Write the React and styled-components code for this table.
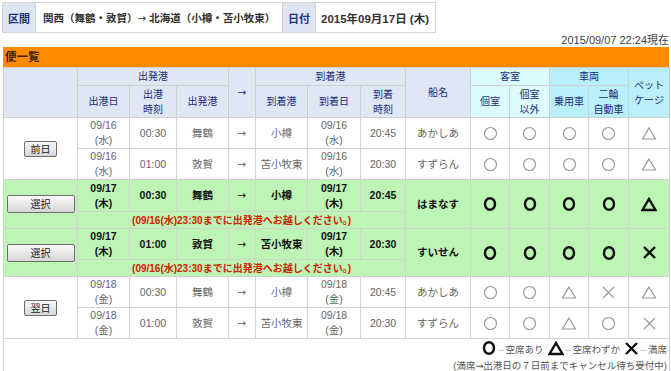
import React from 'react';
import styled, { createGlobalStyle } from 'styled-components';

const GlobalStyle = createGlobalStyle`
  body {
    margin: 0;
    background: #fff;
    font-family: "Liberation Sans", "Noto Sans CJK JP", sans-serif;
  }
`;

const widths = [74, 52, 47, 52, 27, 52, 53, 45, 65, 39, 40, 39, 40, 41];

const Circle = ({ bold }) => (
  bold ? (
    <svg width="14" height="16" viewBox="0 0 14 16">
      <ellipse cx="7" cy="8" rx="5" ry="5.8" fill="none" stroke="#111" strokeWidth="2.4" />
    </svg>
  ) : (
    <svg width="15" height="15" viewBox="0 0 15 15">
      <circle cx="7.5" cy="7.5" r="6" fill="none" stroke="#9a9a9a" strokeWidth="1.2" />
    </svg>
  )
);

const Triangle = ({ bold }) => (
  <svg width="16" height="15" viewBox="0 0 16 15">
    <polygon
      points="8,2 14.5,13 1.5,13"
      fill="none"
      stroke={bold ? '#111' : '#9a9a9a'}
      strokeWidth={bold ? 2.4 : 1.2}
    />
  </svg>
);

const Cross = ({ bold }) => (
  <svg width="15" height="15" viewBox="0 0 15 15">
    <path
      d="M2 2 L13 13 M13 2 L2 13"
      stroke={bold ? '#111' : '#9a9a9a'}
      strokeWidth={bold ? 2.4 : 1.2}
    />
  </svg>
);

const Mark = ({ type, bold }) => {
  if (type === 'o') return <Circle bold={bold} />;
  if (type === 't') return <Triangle bold={bold} />;
  return <Cross bold={bold} />;
};

const prevRows = [
  { dep: '09/16', depW: '(水)', time: '00:30', port: '舞鶴', to: '小樽', arr: '09/16', arrW: '(水)', arrTime: '20:45', ship: 'あかしあ', marks: ['o', 'o', 'o', 'o', 't'] },
  { dep: '09/16', depW: '(水)', time: '01:00', port: '敦賀', to: '苫小牧東', arr: '09/16', arrW: '(水)', arrTime: '20:30', ship: 'すずらん', marks: ['o', 'o', 'o', 'o', 't'] },
];

const selRows = [
  { dep: '09/17', depW: '(木)', time: '00:30', port: '舞鶴', to: '小樽', arr: '09/17', arrW: '(木)', arrTime: '20:45', ship: 'はまなす', marks: ['o', 'o', 'o', 'o', 't'], h: 32 },
  { dep: '09/17', depW: '(木)', time: '01:00', port: '敦賀', to: '苫小牧東', arr: '09/17', arrW: '(木)', arrTime: '20:30', ship: 'すいせん', marks: ['o', 'o', 'o', 'o', 'x'], h: 30 },
];

const nextRows = [
  { dep: '09/18', depW: '(金)', time: '00:30', port: '舞鶴', to: '小樽', arr: '09/18', arrW: '(金)', arrTime: '20:45', ship: 'あかしあ', marks: ['o', 'o', 't', 'x', 't'] },
  { dep: '09/18', depW: '(金)', time: '01:00', port: '敦賀', to: '苫小牧東', arr: '09/18', arrW: '(金)', arrTime: '20:30', ship: 'すずらん', marks: ['o', 'o', 't', 'o', 'x'] },
];

const PlainRow = ({ row, button, span }) => (
  <tr>
    {button && (
      <Td rowSpan={span}>
        <SmallButton>{button}</SmallButton>
      </Td>
    )}
    <Td>{row.dep}<br />{row.depW}</Td>
    <Td>{row.time}</Td>
    <Td>{row.port}</Td>
    <Td><Arrow>→</Arrow></Td>
    <Td>{row.to}</Td>
    <Td>{row.arr}<br />{row.arrW}</Td>
    <Td>{row.arrTime}</Td>
    <Td>{row.ship}</Td>
    {row.marks.map((m, i) => (
      <Td key={i}><Mark type={m} /></Td>
    ))}
  </tr>
);

const SelectedRow = ({ row }) => (
  <>
    <tr style={{ height: row.h }}>
      <SelTd rowSpan={2}><SelectButton>選択</SelectButton></SelTd>
      <SelTd>{row.dep}<br />{row.depW}</SelTd>
      <SelTd>{row.time}</SelTd>
      <SelTd>{row.port}</SelTd>
      <SelTd><Arrow>→</Arrow></SelTd>
      <SelTd>{row.to}</SelTd>
      <SelTd>{row.arr}<br />{row.arrW}</SelTd>
      <SelTd>{row.arrTime}</SelTd>
      <SelTd rowSpan={2}>{row.ship}</SelTd>
      {row.marks.map((m, i) => (
        <SelTd key={i} rowSpan={2}><Mark type={m} bold /></SelTd>
      ))}
    </tr>
    <tr>
      <Notice colSpan={7}>(09/16(水)23:30までに出発港へお越しください。)</Notice>
    </tr>
  </>
);

export default function App() {
  return (
    <Page>
      <GlobalStyle />
      <InfoBar>
        <InfoLabel>区間</InfoLabel>
        <InfoValue width={248}>関西（舞鶴・敦賀）<Arrow>→</Arrow> 北海道（小樽・苫小牧東）</InfoValue>
        <InfoLabel>日付</InfoLabel>
        <InfoValue width={122}>2015年09月17日 (木)</InfoValue>
      </InfoBar>
      <Updated>2015/09/07 22:24現在</Updated>
      <SectionTitle>便一覧</SectionTitle>
      <Table>
        <colgroup>
          {widths.map((w, i) => <col key={i} style={{ width: w }} />)}
        </colgroup>
        <thead>
          <tr style={{ height: 18 }}>
            <Th rowSpan={2} />
            <Th colSpan={3}>出発港</Th>
            <Th rowSpan={2}><Arrow>→</Arrow></Th>
            <Th colSpan={3}>到着港</Th>
            <Th rowSpan={2}>船名</Th>
            <Th colSpan={2} tone="room">客室</Th>
            <Th colSpan={2} tone="car">車両</Th>
            <Th rowSpan={2} tone="car">ペット<br />ケージ</Th>
          </tr>
          <tr style={{ height: 32 }}>
            <Th>出港日</Th>
            <Th>出港<br />時刻</Th>
            <Th>出発港</Th>
            <Th>到着港</Th>
            <Th>到着日</Th>
            <Th>到着<br />時刻</Th>
            <Th tone="room">個室</Th>
            <Th tone="room">個室<br />以外</Th>
            <Th tone="car">乗用車</Th>
            <Th tone="car">二輪<br />自動車</Th>
          </tr>
        </thead>
        <tbody>
          {prevRows.map((r, i) => (
            <PlainRow key={`p${i}`} row={r} button={i === 0 ? '前日' : null} span={2} />
          ))}
          {selRows.map((r, i) => (
            <SelectedRow key={`s${i}`} row={r} />
          ))}
          {nextRows.map((r, i) => (
            <PlainRow key={`n${i}`} row={r} button={i === 0 ? '翌日' : null} span={2} />
          ))}
          <tr>
            <LegendCell colSpan={14}>
              <LegendLine>
                <Mark type="o" bold /><Dots>···</Dots>空席あり
                <Mark type="t" bold /><Dots>···</Dots>空席わずか
                <Mark type="x" bold /><Dots>···</Dots>満席
              </LegendLine>
              <LegendLine>(満席<Arrow>→</Arrow>出港日の７日前までキャンセル待ち受付中)</LegendLine>
            </LegendCell>
          </tr>
        </tbody>
      </Table>
    </Page>
  );
}

const Page = styled.div`
  padding: 2px 2px 0 3px;
  width: 666px;
`;

const InfoBar = styled.div`
  display: flex;
  height: 31px;
  margin-left: -1px;
  width: 434px;
  border: 1px solid #d4d4d4;
  box-sizing: border-box;
`;

const InfoLabel = styled.div`
  display: flex;
  flex-shrink: 0;
  align-items: center;
  justify-content: center;
  width: 32px;
  background: #dde4f2;
  color: #1d3580;
  font-weight: bold;
  font-size: 11px;
`;

const InfoValue = styled.div`
  display: flex;
  flex-shrink: 0;
  align-items: center;
  white-space: pre;
  width: ${({ width }) => width}px;
  padding-left: 7px;
  box-sizing: border-box;
  border-left: 1px solid #d4d4d4;
  border-right: 1px solid #d4d4d4;
  color: #333;
  font-weight: bold;
  font-size: 10.5px;
  &:last-child { border-right: none; padding-left: 5px; font-size: 11.5px; }
`;

const Arrow = styled.span`
  font-family: "DejaVu Sans", sans-serif;
  font-weight: normal;
`;

const Updated = styled.div`
  text-align: right;
  font-size: 11px;
  color: #444;
  height: 14px;
  line-height: 14px;
`;

const SectionTitle = styled.div`
  background: #ff8a00;
  height: 20px;
  line-height: 20px;
  padding-left: 2px;
  font-size: 11.5px;
  font-weight: bold;
  color: #3a2410;
`;

const Table = styled.table`
  border-collapse: collapse;
  table-layout: fixed;
  width: 666px;
  font-size: 10px;
  line-height: 15px;
`;

const toneBg = {
  room: '#dcfbff',
  car: '#b9eff9',
};

const Th = styled.th`
  background: ${({ tone }) => toneBg[tone] || '#dfe6f4'};
  color: #1d2d78;
  font-weight: normal;
  border: 1px solid #cfcfcf;
  padding: 0;
  text-align: center;
  vertical-align: middle;
`;

const Td = styled.td`
  height: 30px;
  border: 1px solid #d2d2d2;
  padding: 0;
  text-align: center;
  vertical-align: middle;
  color: #666;
  font-size: 10.5px;
  svg { display: block; margin: 0 auto; }
`;

const SelTd = styled(Td)`
  background: #bdf5b4;
  color: #111;
  font-weight: bold;
  height: auto;
`;

const Notice = styled.td`
  background: #bdf5b4;
  color: #cc2200;
  font-weight: bold;
  font-size: 10px;
  text-align: center;
  height: 16px;
  padding: 0;
  border: 1px solid #d2d2d2;
`;

const SmallButton = styled.button`
  font-family: "Noto Sans CJK JP", sans-serif;
  font-size: 10px;
  width: 33px;
  height: 16px;
  padding: 0;
  line-height: 14px;
  color: #222;
  border: 1px solid #6e6e6e;
  border-radius: 2px;
  background: linear-gradient(#fafafa, #d6d6d6);
`;

const SelectButton = styled(SmallButton)`
  width: 68px;
  height: 18px;
  line-height: 16px;
`;

const LegendCell = styled.td`
  border: 1px solid #d2d2d2;
  text-align: right;
  padding: 1px 2px 0 0;
  color: #555;
  font-size: 9.5px;
  line-height: 15px;
  svg { vertical-align: -3px; margin-left: 4px; }
`;

const LegendLine = styled.div`
  white-space: nowrap;
`;

const Dots = styled.span`
  color: #999;
  font-size: 9px;
  letter-spacing: -1px;
  margin: 0 2px 0 1px;
`;
